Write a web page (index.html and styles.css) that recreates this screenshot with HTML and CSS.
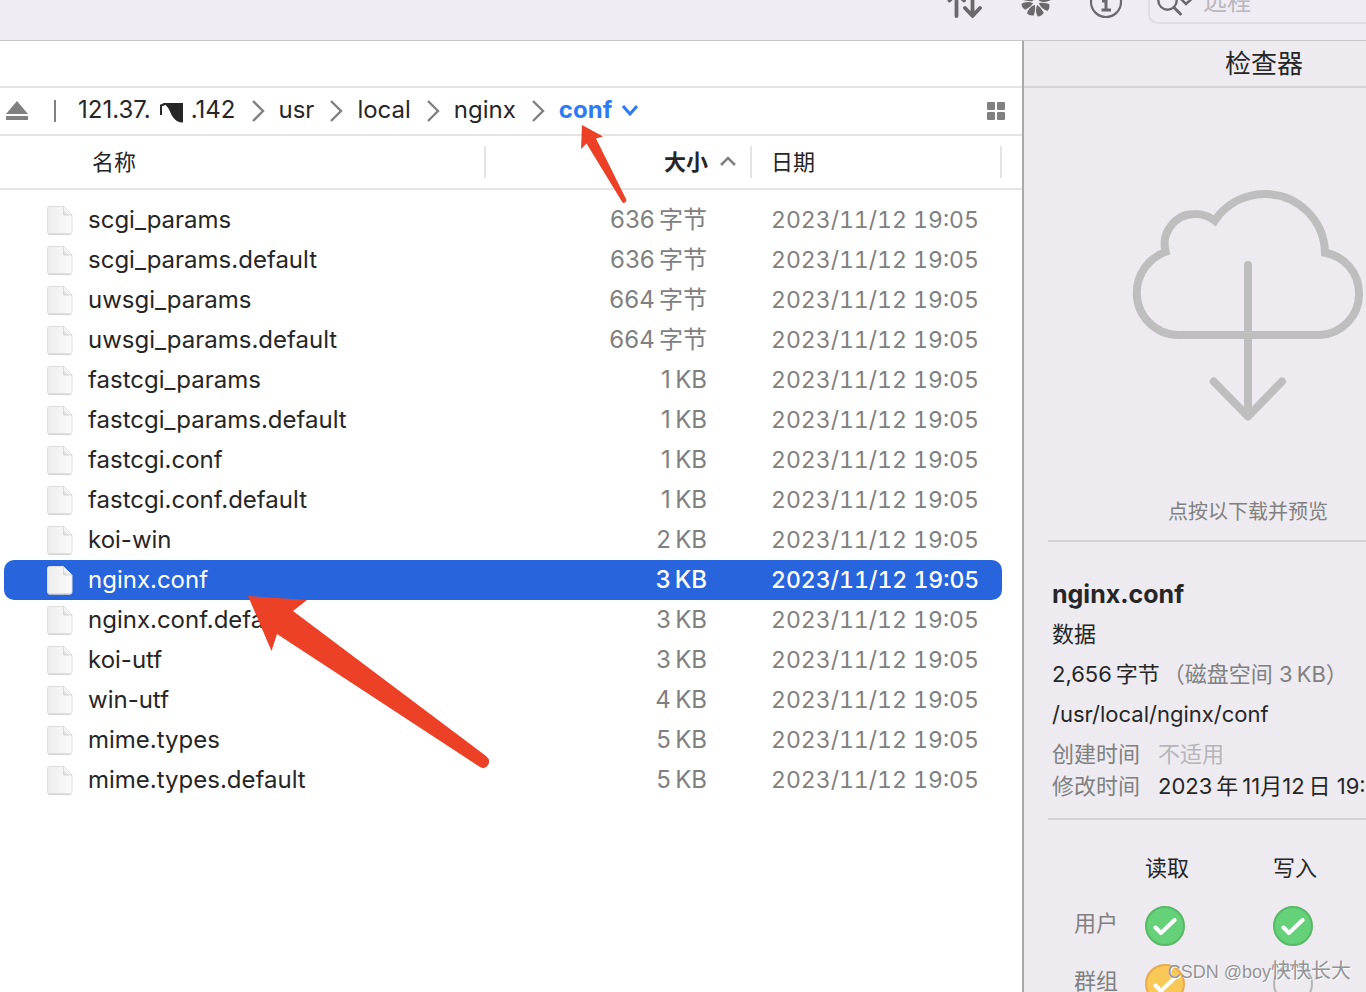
FILE: index.html
```html
<!DOCTYPE html>
<html lang="zh-CN">
<head>
<meta charset="utf-8">
<title>nginx/conf</title>
<link rel="stylesheet" href="styles.css">
</head>
<body>
<svg class="defs" width="0" height="0" aria-hidden="true">
  <defs>
    <linearGradient id="paper" x1="0" y1="0" x2="1" y2="0">
      <stop offset="0" stop-color="#ececec"/><stop offset="1" stop-color="#fbfbfb"/>
    </linearGradient>
    <linearGradient id="fold" x1="0" y1="1" x2="1" y2="0">
      <stop offset="0" stop-color="#d0d0d0"/><stop offset=".5" stop-color="#ffffff"/>
    </linearGradient>
    <symbol id="file" viewBox="0 0 28 32">
      <path d="M3.500 2.500h14l8.500 8.500V28a2 2 0 0 1-2 2H3.500a2 2 0 0 1-2-2V4.500a2 2 0 0 1 2-2z" fill="url(#paper)" stroke="#dedede" stroke-width="1"/>
      <path d="M2.500 30.200h22" stroke="#c8c8c8" stroke-width="1"/>
      <path d="M17.500 2.500l8.500 8.500h-8.500z" fill="url(#fold)" stroke="#cfcfcf" stroke-width=".7"/>
    </symbol>
    <symbol id="sep" viewBox="0 0 14 24"><path d="M2 2l10 10L2 22" fill="none" stroke="#808080" stroke-width="2.400"/></symbol>
    <symbol id="tick" viewBox="0 0 24 20"><path d="M2.500 11.500l5.500 5.500L21.500 4" fill="none" stroke="#fff" stroke-width="4" stroke-linecap="round" stroke-linejoin="round"/></symbol>
  </defs>
</svg>
<div class="window">
  <header class="toolbar">
    <button class="tool" aria-label="传输"><svg width="38" height="40" viewBox="0 0 38 40"><path d="M10.500 32V9M3.500 16.500l7-7.500 7.500 7.500M26.500 7v24M19 24l7.500 8 7.500-8" fill="none" stroke="#6b686e" stroke-width="3.800" stroke-linecap="round" stroke-linejoin="round"/></svg></button>
    <button class="tool" aria-label="同步"><svg width="32" height="40" viewBox="-16 -18 32 40"><g fill="#6b686e" id="petals"></g></svg></button>
    <button class="tool" aria-label="简介"><svg width="34" height="40" viewBox="0 0 34 40"><circle cx="17" cy="18" r="15" fill="none" stroke="#6b686e" stroke-width="2.200"/><circle cx="16.500" cy="11" r="2.500" fill="#6b686e"/><path d="M13 17h4v9M12.500 26h9.500" fill="none" stroke="#6b686e" stroke-width="3"/></svg></button>
    <label class="search"><svg width="40" height="32" viewBox="0 0 40 32"><circle cx="14.500" cy="10.500" r="9.200" fill="none" stroke="#6b686e" stroke-width="2.400"/><path d="M21 17.500l6.500 6.500" stroke="#6b686e" stroke-width="3" stroke-linecap="round"/><path d="M28 9l5 5 5.500-5" fill="none" stroke="#6b686e" stroke-width="2.500"/></svg><input type="text" placeholder="远程" aria-label="搜索"></label>
  </header>
  <div class="panes">
    <main class="browser">
      <div class="tabs"></div>
      <nav class="path" aria-label="路径">
        <button class="eject" aria-label="推出"><svg width="24" height="20" viewBox="0 0 24 20"><path d="M12 0l11 13H1zM1 15h22v4H1z" fill="#808080"/></svg></button>
        <span class="bar"></span>
        <a class="host" href="#">121.37.<svg width="40" height="28" viewBox="0 0 40 28"><path d="M10 19V9.500l4-1.500" fill="none" stroke="#262626" stroke-width="2"/><path d="M11.500 7H32v19.500q-5 .5-9-4-3-3.500-4.500-8Q16 9 11.500 7z" fill="#262626"/></svg>.142</a>
        <svg class="sep" width="14" height="24"><use href="#sep"/></svg>
        <a href="#">usr</a>
        <svg class="sep" width="14" height="24"><use href="#sep"/></svg>
        <a href="#">local</a>
        <svg class="sep" width="14" height="24"><use href="#sep"/></svg>
        <a href="#">nginx</a>
        <svg class="sep" width="14" height="24"><use href="#sep"/></svg>
        <a class="current" href="#">conf<svg width="16" height="12" viewBox="0 0 16 12"><path d="M1 2l7 8 7-8" fill="none" stroke="#2f7bf6" stroke-width="3"/></svg></a>
        <button class="grid" aria-label="显示方式"><svg width="18" height="18" viewBox="0 0 18 18"><g fill="#808080"><rect width="8" height="8" rx="1"/><rect x="10" width="8" height="8" rx="1"/><rect y="10" width="8" height="8" rx="1"/><rect x="10" y="10" width="8" height="8" rx="1"/></g></svg></button>
      </nav>
      <table class="files">
        <colgroup><col><col class="c-size"><col class="c-date"></colgroup>
        <thead><tr>
          <th scope="col" class="name"><div>名称</div></th>
          <th scope="col" class="size"><div>大小<svg width="16" height="12" viewBox="0 0 16 12"><path d="M1 9l7-7 7 7" fill="none" stroke="#808080" stroke-width="2.500"/></svg></div></th>
          <th scope="col" class="date"><div>日期</div></th>
        </tr></thead>
        <tbody id="rows"></tbody>
      </table>
    </main>
    <aside class="inspector">
      <h2>检查器</h2>
      <div class="body">
        <button class="preview">
          <svg width="240" height="240" viewBox="0 0 240 240"><g fill="none" stroke="#bebebe" stroke-width="8"><path d="M50 149A42 42 0 0 1 8.800 107A44 44 0 0 1 37.700 65.700A30 30 0 0 1 66.700 28A31 31 0 0 1 86.700 34.700A60 60 0 0 1 136.700 8A60 60 0 0 1 197 66.700A41 41 0 0 1 231 107.300A41 41 0 0 1 192 149z"/><path d="M120 79v151M85.700 195.500L120 230.500l34-35" stroke-linecap="round" stroke-linejoin="round"/></g></svg>
          <span>点按以下载并预览</span>
        </button>
        <section class="info">
          <h3>nginx.conf</h3>
          <p>数据</p>
          <p>2,656&#8201;字节<span class="dim">（磁盘空间 3&#8201;KB）</span></p>
          <p>/usr/local/nginx/conf</p>
          <dl><dt>创建时间</dt><dd class="na">不适用</dd><dt>修改时间</dt><dd>2023&#8201;年&#8201;11月12&#8201;日 19:05</dd></dl>
        </section>
        <div class="perms">
          <span></span><span>读取</span><span>写入</span>
          <span class="who">用户</span>
          <label class="check green"><input type="checkbox" checked aria-label="用户读取"><svg width="24" height="20"><use href="#tick"/></svg></label>
          <label class="check green"><input type="checkbox" checked aria-label="用户写入"><svg width="24" height="20"><use href="#tick"/></svg></label>
          <span class="who">群组</span>
          <label class="check amber"><input type="checkbox" checked aria-label="群组读取"><svg width="24" height="20"><use href="#tick"/></svg></label>
          <label class="check"><input type="checkbox" aria-label="群组写入"></label>
        </div>
      </div>
    </aside>
  </div>
  <svg class="arrow small" width="48" height="80" viewBox="0 0 48 80"><path d="M2 1L23 12.500l-7 2L46.500 76q-1 4-4 2.500L6.500 19.500 1 25z" fill="#ec4126"/></svg>
  <svg class="arrow large" width="244" height="174" viewBox="0 0 244 174"><path d="M0 0l59 4-14 11 193 145q5 4 2 9t-8 2L29 38l-5.500 17z" fill="#ec4126"/></svg>
  <div class="mark"><span>CSDN @boy</span>快快长大</div>
</div>
<script src="app.js"></script>
</body>
</html>
```
FILE: app.js
```js
const thin = '\u2009';
const files = [
  ['scgi_params', '636' + thin + '字节'],
  ['scgi_params.default', '636' + thin + '字节'],
  ['uwsgi_params', '664' + thin + '字节'],
  ['uwsgi_params.default', '664' + thin + '字节'],
  ['fastcgi_params', '1' + thin + 'KB'],
  ['fastcgi_params.default', '1' + thin + 'KB'],
  ['fastcgi.conf', '1' + thin + 'KB'],
  ['fastcgi.conf.default', '1' + thin + 'KB'],
  ['koi-win', '2' + thin + 'KB'],
  ['nginx.conf', '3' + thin + 'KB'],
  ['nginx.conf.default', '3' + thin + 'KB'],
  ['koi-utf', '3' + thin + 'KB'],
  ['win-utf', '4' + thin + 'KB'],
  ['mime.types', '5' + thin + 'KB'],
  ['mime.types.default', '5' + thin + 'KB']
];
document.getElementById('rows').innerHTML = files.map(([name, size]) =>
  `<tr${name === 'nginx.conf' ? ' class="selected"' : ''}><td class="name"><div><svg width="28" height="32"><use href="#file"/></svg>${name}</div></td><td class="size"><div>${size}</div></td><td class="date"><div>2023/11/12 19:05</div></td></tr>`
).join('');
document.getElementById('petals').innerHTML = [22, 67, 112, 157, 202, 247, 292, 337].map(a =>
  `<path transform="rotate(${a})" d="M0 3Q-5 8-4 14q3.500 1.500 7-1Q2.500 7 0 3z"/>`
).join('');
```
FILE: styles.css
```css
* { box-sizing: border-box; }
body { margin: 0; background: #fff; color: #262626; font: 24px/40px Inter, "Noto Sans CJK SC", sans-serif; }
button { border: 0; padding: 0; background: none; color: inherit; font: inherit; }
a { color: inherit; text-decoration: none; }
svg { flex: none; }
.defs { position: absolute; }
.window { position: relative; height: 100vh; overflow: hidden; display: flex; flex-direction: column; }

.toolbar { height: 41px; flex: none; display: flex; justify-content: flex-end; align-items: flex-end; padding-bottom: 16px; background: #efecf3; border-bottom: 1px solid #c8c5cb; }
.tool { display: flex; height: 40px; }
.tool:nth-child(1) { margin-right: 36px; }
.tool:nth-child(2) { margin-right: 37px; }
.tool:nth-child(3) { margin-right: 25px; }
.search { display: flex; align-items: flex-end; width: 218px; height: 40px; border: 2px solid #e0dde4; border-right: 0; border-radius: 10px 0 0 10px; padding-left: 3px; }
.search input { width: 160px; border: 0; padding: 0 0 4px 10px; background: none; font: inherit; line-height: 32px; outline: 0; }
.search input::placeholder { color: #b9b6bd; opacity: 1; }

.panes { flex: 1; min-height: 0; display: grid; grid-template-columns: minmax(0, 1fr) 344px; }
.browser { min-width: 0; overflow: hidden; }
.tabs { height: 47px; border-bottom: 2px solid #e4e4e4; }
.path { display: flex; align-items: center; height: 48px; padding: 0 17px 0 5px; border-bottom: 2px solid #e4e4e4; }
.path a { padding-bottom: 2px; }
.eject, .grid { display: flex; }
.grid { margin-left: auto; }
.bar { width: 2px; height: 22px; margin: 0 22px 0 25px; background: #808080; }
.host { display: flex; align-items: center; }
.sep { margin: 0 14px 0 15px; }
.current { display: flex; align-items: center; gap: 10px; color: #2f7bf6; font-weight: 700; }

.files { width: 100%; border-spacing: 0; table-layout: fixed; }
.c-size { width: 266px; }
.c-date { width: 270px; }
th { height: 54px; padding: 0; border-bottom: 2px solid #e4e4e4; font-size: 22px; font-weight: 400; text-align: left; }
th div { display: flex; align-items: center; height: 32px; border-right: 2px solid #e4e4e4; }
th.name div { padding-left: 92px; }
th.size div { justify-content: flex-end; gap: 12px; padding-right: 14px; font-weight: 700; }
th.date div { margin-right: 20px; padding-left: 19px; }
tbody::before { content: ""; display: block; height: 10px; }
td { height: 40px; padding: 0; color: #808080; white-space: nowrap; }
td.name { color: #262626; }
td.name div { display: flex; align-items: center; gap: 14px; margin-left: 4px; padding-left: 42px; border-radius: 10px 0 0 10px; }
td.size div { height: 40px; padding-right: 45px; text-align: right; }
td.date div { height: 40px; margin-right: 20px; padding-left: 19px; border-radius: 0 10px 10px 0; font-size: 23px; font-variant-numeric: tabular-nums; }
tr.selected td { color: #fff; }
tr.selected td div { background: #2864dc; }
tr.selected .size, tr.selected .date { font-weight: 500; }

.inspector { min-width: 0; overflow: hidden; border-left: 2px solid #a9a9ac; background: #edebf0; }
.inspector h2 { width: 480px; height: 47px; margin: 0; border-bottom: 2px solid #d4d2d8; font-size: 26px; font-weight: 400; line-height: 46px; text-align: center; }
.body { width: 448px; padding: 0 24px; }
.preview { display: flex; flex-direction: column; align-items: center; width: 100%; height: 454px; padding-top: 98px; border-bottom: 2px solid #d4d2d8; color: #808080; font-size: 20px; }
.preview span { margin-top: 66px; }
.info { height: 278px; padding: 32px 4px 0; border-bottom: 2px solid #d4d2d8; font-size: 22px; white-space: nowrap; }
h3, p, dl, dd { margin: 0; }
h3 { font-size: 25px; }
.dim, dt { color: #808080; }
.dim { margin-left: 3px; }
dl { display: grid; grid-template-columns: 106px 1fr; line-height: 32px; padding-top: 4px; }
.na { color: #b6b5ba; }
.perms { display: grid; grid-template-columns: 97px 128px 128px; grid-auto-rows: 58px; align-items: center; padding-top: 19px; font-size: 22px; }
.who { padding: 0 0 6px 26px; color: #808080; }
.check { position: relative; display: flex; align-items: center; justify-content: center; width: 40px; height: 40px; border: 2px solid #b5b4b8; border-radius: 50%; }
.check input { position: absolute; inset: 0; margin: 0; opacity: 0; }
.green { background: #65d179; border-color: #57b867; }
.amber { background: #f9c958; border-color: #eba94f; }

.arrow { position: absolute; }
.small { left: 580px; top: 124px; }
.large { left: 248px; top: 596px; }
.mark { position: absolute; right: 15px; bottom: 0; color: #949396; font: 20px/40px "Liberation Sans", "Noto Sans CJK SC", sans-serif; text-shadow: 1px 1px #fff; }
.mark span { font-size: 18px; }
```
